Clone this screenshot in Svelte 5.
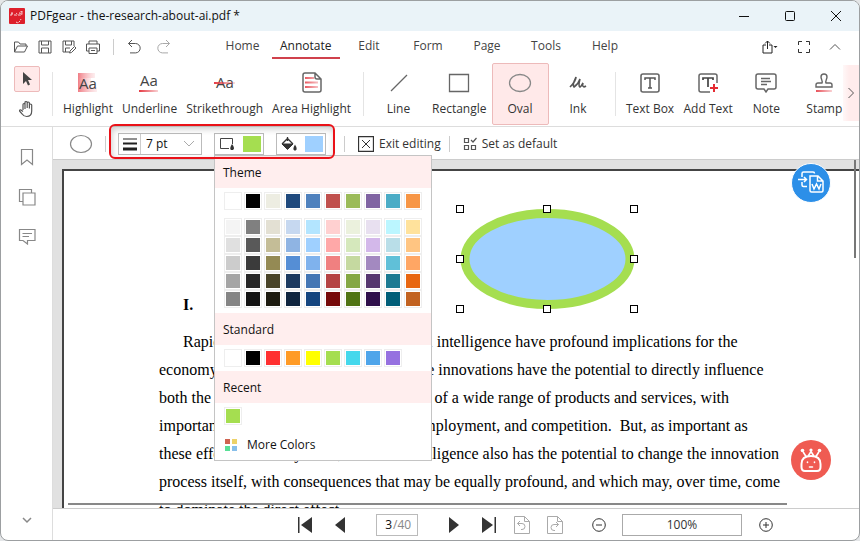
<script lang="ts">
	const tabs = ['Home', 'Annotate', 'Edit', 'Form', 'Page', 'Tools', 'Help'];
	let activeTab = $state('Annotate');

	const toolGroups = [
		['Highlight', 'Underline', 'Strikethrough', 'Area Highlight'],
		['Line', 'Rectangle', 'Oval', 'Ink'],
		['Text Box', 'Add Text', 'Note', 'Stamp']
	];
	let activeTool = $state('Oval');

	const themeBase = [
		'#ffffff', '#000000', '#edede2', '#1f497d', '#4f81bd', '#c0504d', '#9bbb59', '#8064a2', '#4bacc6', '#f79646'
	];
	const themeShades = [
		['#f4f4f4', '#808080', '#e3e0d3', '#c6d8f0', '#b3e5ff', '#ffd0d0', '#ebf1dd', '#e8e0f0', '#bbf6ff', '#ffe29c'],
		['#e0e0e0', '#595959', '#c4bd97', '#8fb4e3', '#9fd0ff', '#ffa8a8', '#d5e8bc', '#d3b8ea', '#b9dee8', '#ffc582'],
		['#cccccc', '#3b3b3b', '#948a54', '#558ed5', '#7fb2ed', '#f08080', '#c5d9a0', '#a389c0', '#60c0d8', '#ffa664'],
		['#a5a5a5', '#262626', '#494429', '#1c3a60', '#4476b4', '#b54343', '#84a744', '#56376f', '#1c7a92', '#e86610'],
		['#858585', '#141414', '#1d1b10', '#0f243e', '#15457f', '#760909', '#507414', '#2e0f4a', '#005e78', '#c26220']
	];
	const standardColors = [
		'#ffffff', '#000000', '#ff3030', '#ff9b26', '#ffff00', '#a5de50', '#45d8ec', '#4fa5ea', '#9671e0'
	];

	let strokeColor = $state('#a5de50');
	let fillColor = $state('#9fd0ff');
	let lineWidth = $state('7 pt');
	let page = $state('3');
	let zoom = $state('100%');

	const lines = [
		'Rapid advances in the field of artificial intelligence have profound implications for the',
		'economy as well as society at large.  These innovations have the potential to directly influence',
		'both the production and the characteristics of a wide range of products and services, with',
		'important implications for productivity, employment, and competition.  But, as important as',
		'these effects are likely to be, artificial intelligence also has the potential to change the innovation',
		'process itself, with consequences that may be equally profound, and which may, over time, come',
		'to dominate the direct effect.'
	];

	const handles = [
		[0, 0], [87, 0], [174, 0],
		[0, 50], [174, 50],
		[0, 100], [87, 100], [174, 100]
	];
</script>

{#snippet swatches(colors: string[])}
	<div class="swatches">
		{#each colors as color}
			<button class="swatch" aria-label={color} onclick={() => (strokeColor = color)}>
				<span style="background: {color}"></span>
			</button>
		{/each}
	</div>
{/snippet}

{#snippet toolIcon(name: string)}
	<svg class="tool-icon" width="24" height="24" viewBox="0 0 24 24" fill="none" stroke="#666" stroke-width="1.3">
		{#if name === 'Highlight'}
			<path d="M2 2h17v5H2z" fill="url(#fade)" stroke="none" />
			<path d="M2 7h13v9H2z" fill="url(#fade)" stroke="none" />
			<path d="M2 16h19v5H2z" fill="url(#fade)" stroke="none" />
			<text x="3" y="18" class="aa">Aa</text>
		{:else if name === 'Underline'}
			<text x="2" y="15" class="aa">Aa</text>
			<path d="M1 20h18v.1z" stroke="url(#red)" stroke-width="2" />
		{:else if name === 'Strikethrough'}
			<text x="3" y="17" class="aa">Aa</text>
			<path d="M1 12h20v.1z" stroke="url(#red)" stroke-width="2" />
		{:else if name === 'Area Highlight'}
			<path d="M5 2h10l6 6v11q0 2-2 2H5q-2 0-2-2V4q0-2 2-2zM15 2v4q0 2 2 2h4" stroke-width="1.500" />
			<path d="M5 7h8v.1zM5 11.500h12v.1zM5 16h12v.1z" stroke="url(#red)" stroke-width="2" />
		{:else if name === 'Line'}
			<path d="M4 20 20 4" />
		{:else if name === 'Rectangle'}
			<path d="M2.500 3.500h19v17h-19z" />
		{:else if name === 'Oval'}
			<ellipse cx="12" cy="12" rx="10.500" ry="8.500" stroke="#888" />
		{:else if name === 'Ink'}
			<path d="M4 16c4-4 6-7 6-10-2 4-4 8-2 10 3-2 5-5 6-8-1 4-2 7 0 8 2-1 2-3 3-4-1 3 0 5 3 3" stroke="#555" stroke-width="1.600" />
		{:else if name === 'Text Box'}
			<rect x="3" y="3" width="18" height="18" rx="2" stroke-width="1.600" />
			<path d="M7 9V7h10v2M12 7v10M10 17h4" stroke="#555" stroke-width="1.500" />
		{:else if name === 'Add Text'}
			<path d="M14 21H5q-2 0-2-2V5q0-2 2-2h14q2 0 2 2v7" stroke-width="1.500" />
			<path d="M7 9V7h10v2M12 7v9" stroke="#444" stroke-width="1.700" />
			<path d="M18 13v8M14 17h8" stroke="#e52b32" stroke-width="2" />
		{:else if name === 'Note'}
			<path d="M4 3h16q2 0 2 2v11q0 2-2 2h-6l-2 3-2-3H4q-2 0-2-2V5q0-2 2-2z" stroke-width="1.500" />
			<path d="M7 7.500h9M7 10.500h10M7 13.500h6" />
		{:else}
			<path d="M10 12c1-2-1-4-1-6 0-4 6-4 6 0 0 2-2 4-1 6h4q2 0 2 2v2H4v-2q0-2 2-2z" stroke-width="1.400" />
			<path d="M4 20h15v.1z" stroke="url(#red)" stroke-width="2" />
		{/if}
	</svg>
{/snippet}

<svg class="defs" width="0" height="0" aria-hidden="true">
	<defs>
		<linearGradient id="fade">
			<stop offset="0" stop-color="#f07c84" />
			<stop offset="1" stop-color="#f8c4c8" stop-opacity="0.300" />
		</linearGradient>
		<linearGradient id="red" gradientUnits="userSpaceOnUse" x1="2" y1="0" x2="21" y2="0">
			<stop offset="0" stop-color="#e6414a" />
			<stop offset="1" stop-color="#e6414a" stop-opacity="0.200" />
		</linearGradient>
	</defs>
</svg>

<div class="window">
	<header class="titlebar">
		<svg class="logo" width="16" height="16" viewBox="0 0 16 16">
			<rect width="16" height="16" rx="1" fill="#dd1f2b" />
			<path d="M2 8V5h2v1H2M6 8V5M7 5q2 1 0 3M10 8V5h1M13 4q-2-1-2 1t2 0V3M13 5q0 3-2 2M7 14l2 1 2-2 1-2" stroke="#fff" fill="none" stroke-dasharray="2 1" stroke-width="0.800" />
		</svg>
		<h1>PDFgear - the-research-about-ai.pdf *</h1>
		<div class="window-buttons">
			<button aria-label="Minimize"><svg width="12" height="12" stroke="#111"><path d="M1 6.500h10" /></svg></button>
			<button aria-label="Maximize"><svg width="12" height="12" stroke="#111" fill="none"><rect x="1.500" y="1.500" width="9" height="9" rx="1" /></svg></button>
			<button aria-label="Close"><svg width="12" height="12" stroke="#111"><path d="m1 1 10 10M11 1 1 11" /></svg></button>
		</div>
	</header>

	<div class="menubar">
		<div class="quick">
			<button aria-label="Open"><svg width="16" height="16" viewBox="0 0 16 16"><path d="M1.500 13V3h4l1.500 2h6v2M1.500 13l3-6h10l-3 6z" /></svg></button>
			<button aria-label="Save"><svg width="16" height="16" viewBox="0 0 16 16"><path d="M2 2h12v12H2zM4.500 2v4h7V2M4.500 14V9h7v5" /></svg></button>
			<button aria-label="Save as"><svg width="16" height="16" viewBox="0 0 16 16"><path d="M8 13H2V2h11v5M4.500 2v4h6V2M4.500 13V9H9M9 12l4.500-4.500 1.500 1.500-4.500 4.500-2 .5z" /></svg></button>
			<button aria-label="Print"><svg width="16" height="16" viewBox="0 0 16 16"><path d="M4 5V2h8v3M4 12H1.500V5h13v7H12M4 9h8v5.500H4zM6 11.500h4" /></svg></button>
			<span class="divider"></span>
			<button aria-label="Undo"><svg width="16" height="16" viewBox="0 0 16 16"><path d="M6 1 2.500 4.500 6 8M2.500 4.500h7a4.700 4.700 0 0 1 0 9.400H4" /></svg></button>
			<button class="redo" aria-label="Redo"><svg width="16" height="16" viewBox="0 0 16 16"><path d="m10 1 3.500 3.500L10 8M13.500 4.500h-7a4.700 4.700 0 0 0 0 9.400H12" /></svg></button>
		</div>
		<nav>
			{#each tabs as tab}
				<button class:active={tab === activeTab} onclick={() => (activeTab = tab)}>{tab}</button>
			{/each}
		</nav>
		<div class="view-actions">
			<button aria-label="Share"><svg width="18" height="16" viewBox="0 0 18 16"><path d="M5 6H2v8h9V6H8M6.500 10V2M4 4.500 6.500 2 9 4.500" stroke="#222" /><path d="M12.500 7h4l-2 2z" fill="#222" stroke="none" /></svg></button>
			<button aria-label="Full screen"><svg width="14" height="14" viewBox="0 0 14 14"><path d="M1.500 5V1.500H5M9 1.500h3.500V5M12.500 9v3.500H9M5 12.500H1.500V9" stroke="#333" /></svg></button>
			<button aria-label="Collapse ribbon"><svg width="12" height="12" viewBox="0 0 12 12"><path d="m1 8.500 5-5 5 5" /></svg></button>
		</div>
	</div>

	<div class="ribbon">
		<div class="pointer-tools">
			<button class="selected" aria-label="Select">
				<svg width="14" height="18" viewBox="0 0 14 18"><path d="M3 2v12l3-3 2 4.500 2-1L8 10h4z" fill="#444" /></svg>
			</button>
			<button aria-label="Hand">
				<svg width="18" height="18" viewBox="0 0 18 18" fill="none" stroke="#555" stroke-width="1.200"><path d="M5 10V4.500q0-1 1-1t1 1V9M7 8V2.500q0-1 1-1t1.200 1V8M9.200 8V3q0-1 1.100-1t1.100 1v5.500M11.400 8.500V5q0-1 1.100-1t1.200 1v6q0 5.500-5 5.500-3 0-4.500-2.500L1.500 11q0-1.500 1.500-1l2 1.500" /></svg>
			</button>
		</div>
		{#each toolGroups as group}
			<div class="tool-group">
				{#each group as tool}
					<button class:selected={tool === activeTool} onclick={() => (activeTool = tool)}>
						{@render toolIcon(tool)}
						<span>{tool}</span>
					</button>
				{/each}
			</div>
		{/each}
		<button class="more-tools" aria-label="Scroll right">
			<svg width="8" height="12" fill="none" stroke="#555"><path d="m1.500 1 5 5-5 5" /></svg>
		</button>
	</div>

	<div class="body">
		<aside>
			<button aria-label="Bookmarks"><svg width="18" height="18" viewBox="0 0 18 18"><path d="M3.500 1.500h11v15L9 12l-5.500 4.500z" /></svg></button>
			<button aria-label="Thumbnails"><svg width="18" height="18" viewBox="0 0 18 18"><path d="M5 13.500H1.500v-12h12V5M5 5h12v12H5z" /></svg></button>
			<button aria-label="Comments"><svg width="18" height="18" viewBox="0 0 18 18"><path d="M1.500 1.500h15.500v11H9.500V16L5 12.500H1.500zM4.500 5.500H14M4.500 8.500H11" /></svg></button>
			<button class="expand" aria-label="Expand"><svg width="12" height="12" viewBox="0 0 12 12"><path d="m2 4 4 4 4-4" stroke-width="1.500" /></svg></button>
		</aside>

		<div class="workspace">
			<div class="optionbar">
				<svg class="shape" width="24" height="20" fill="none" stroke="#888" stroke-width="1.200"><ellipse cx="12" cy="10" rx="10.500" ry="8.500" /></svg>
				<span class="divider"></span>
				<div class="style-options">
					<label class="width-picker">
						<svg width="14" height="14" stroke="#222"><path d="M0 2h14" /><path d="M0 6.500h14" stroke-width="2" /><path d="M0 12h14" stroke-width="3" /></svg>
						<select bind:value={lineWidth} aria-label="Line width">
							<option>1 pt</option>
							<option>3 pt</option>
							<option>7 pt</option>
						</select>
						<svg class="caret" width="12" height="8" fill="none" stroke="#aaa"><path d="m1 1 5 5 5-5" /></svg>
					</label>
					<div class="stroke-picker">
						<button class="color-button" aria-label="Stroke color">
							<svg width="16" height="16" viewBox="0 0 16 16"><path d="M10 12.500H1.500v-10h12V8" fill="none" stroke="#444" /><path d="M13 8q3 4 1.500 5.500-1.500 1.200-3 0Q10.500 12 13 8z" fill="#333" /></svg>
							<span style="background: {strokeColor}"></span>
						</button>
						<div class="palette">
							<h2>Theme</h2>
							<div class="base">{@render swatches(themeBase)}</div>
							<div class="shades">
								{#each themeShades as row}
									{@render swatches(row)}
								{/each}
							</div>
							<h2>Standard</h2>
							<div class="base">{@render swatches(standardColors)}</div>
							<h2>Recent</h2>
							<div class="base">{@render swatches(['#a5de50'])}</div>
							<button class="more-colors">
								<svg width="12" height="12"><path d="M0 0h5v5H0z" fill="#cf6350" /><path d="M7 0h5v5H7z" fill="#edd268" /><path d="M0 7h5v5H0z" fill="#58df96" /><path d="M7 7h5v5H7z" fill="#87bfea" /></svg>
								More Colors
							</button>
						</div>
					</div>
					<button class="color-button" aria-label="Fill color">
						<svg width="16" height="16" viewBox="0 0 16 16"><path d="M1 8h11L6.500 13.500z" fill="#333" stroke="#333" /><path d="M1 8l5.500-5.500L12 8M6.500 5V1" fill="none" stroke="#333" stroke-width="1.300" /><path d="M14 8.500q2.500 4 1.200 5.500-1.200 1-2.400 0-1.200-1.500 1.200-5.500z" fill="#333" /></svg>
						<span style="background: {fillColor}"></span>
					</button>
				</div>
				<span class="divider"></span>
				<button class="option">
					<svg width="16" height="16" fill="none" stroke="#333"><path d="M.5.5h15v15H.5z" stroke-width="1.300" /><path d="m4 4 8 8M12 4l-8 8" /></svg>
					Exit editing
				</button>
				<span class="divider"></span>
				<button class="option">
					<svg width="14" height="14" fill="none" stroke="#555" stroke-width="1.200"><path d="M1.500 1.500h4v4h-4zM1.500 8.500h4v4h-4zM8.500 8.500h4v4h-4zM8 3l2 2 3.500-4" /></svg>
					Set as default
				</button>
			</div>

			<main>
				<article>
					<h3>I.</h3>
					<p>
						{#each lines as line}
							<span>{line}</span>
						{/each}
					</p>
					<svg class="annotation" width="182" height="108" viewBox="-4 -4 182 108">
						<ellipse cx="87.500" cy="50" rx="82.500" ry="45.500" fill={fillColor} stroke={strokeColor} stroke-width="9" />
						{#each handles as [x, y]}
							<rect x={x - 3.5} y={y - 3.5} width="7" height="7" fill="#fff" stroke="#000" />
						{/each}
					</svg>
				</article>
				<div class="page-rule"></div>
				<button class="float convert" aria-label="Convert to Word">
					<svg width="28" height="26" viewBox="0 0 28 26" fill="none" stroke="#fff" stroke-width="1.500">
						<path d="M5 7V3.500q0-1.500 1.500-1.500H16q1.500 0 1.500 1.500M5 12v3q0 1.500 1.500 1.500H10M1 9.500h8M7 7l2.500 2.500L7 12" />
						<path d="M13 6h8l5 5v9.500q0 1.500-1.500 1.500h-10q-1.500 0-1.500-1.500zM20.500 6v5H26" />
						<path d="m15 14 2 5 2.500-5 2.500 5 2-5" />
					</svg>
				</button>
				<button class="float assistant" aria-label="Assistant">
					<svg width="26" height="28" viewBox="0 0 26 28" fill="none" stroke="#fff" stroke-width="2" stroke-linecap="round">
						<path d="M7 25q-3.500 0-3.500-4v-3q0-8 9.500-8t9.500 8v3q0 4-3.500 4z" />
						<path d="M8 10.500 5.500 6.500M18 10.500l2.500-4M10.500 9.500 13 5.500l2.500 4" stroke-width="1.600" />
						<path d="M9.500 16v.5M16.500 16v.5M11.500 21h3" stroke-width="1.600" />
						<g fill="#fff" stroke="none"><circle cx="4.500" cy="4.500" r="1.800" /><circle cx="21.500" cy="4.500" r="1.800" /><circle cx="13" cy="4" r="1.600" /></g>
					</svg>
				</button>
				<div class="scroll-thumb"></div>
			</main>

			<footer>
				<button aria-label="First page"><svg width="16" height="16" fill="#333"><path d="M1 0h1.500v16H1zM15 0v16L4 8z" /></svg></button>
				<button aria-label="Previous page"><svg width="10" height="16" fill="#333"><path d="M10 0v16L0 8z" /></svg></button>
				<label class="page-box">
					<input bind:value={page} aria-label="Page" />
					<span>/40</span>
				</label>
				<button aria-label="Next page"><svg width="10" height="16" fill="#333"><path d="M0 0v16l10-8z" /></svg></button>
				<button aria-label="Last page"><svg width="16" height="16" fill="#333"><path d="M13.500 0H15v16h-1.500zM1 0v16l11-8z" /></svg></button>
				<button class="history" aria-label="Previous view"><svg width="16" height="18" fill="none" stroke="#aaa"><path d="M.5.5h10l5 5v12H.5zM10.500.5v5h5M6 5 3.500 7.500 6 10M3.500 7.500H8q3 0 3 3t-3 3H7" /></svg></button>
				<button class="history" aria-label="Next view"><svg width="16" height="18" fill="none" stroke="#aaa"><path d="M.5.5h10l5 5v12H.5zM10.500.5v5h5M9 6l2.500 2.500L9 11M11.500 8.500H7q-3 0-3 3t3 3h1" /></svg></button>
				<button class="zoom-out" aria-label="Zoom out"><svg width="14" height="14" fill="none" stroke="#333"><circle cx="7" cy="7" r="6.300" /><path d="M4 7h6" /></svg></button>
				<input class="zoom" bind:value={zoom} aria-label="Zoom" />
				<button aria-label="Zoom in"><svg width="14" height="14" fill="none" stroke="#333"><circle cx="7" cy="7" r="6.300" /><path d="M4 7h6M7 4v6" /></svg></button>
			</footer>
		</div>
	</div>
</div>

<style>
	:global(body) {
		background: #e4e6e8;
	}
	* {
		box-sizing: border-box;
	}
	button,
	input,
	select {
		font: inherit;
		color: inherit;
		background: none;
		border: 0;
		margin: 0;
		padding: 0;
	}
	svg {
		display: block;
		flex: none;
	}
	.defs {
		position: absolute;
	}
	.window {
		display: flex;
		flex-direction: column;
		height: 100vh;
		border: 1px solid #9c9fa1;
		border-radius: 8px;
		overflow: hidden;
		background: #fff;
		color: #333;
		font: 12px/16px 'Open Sans', 'Noto Sans', sans-serif;
	}

	.titlebar {
		display: flex;
		align-items: center;
		height: 30px;
		padding-left: 8px;
		gap: 5px;
		background: #eaf3f8;
	}
	h1 {
		flex: 1;
		margin: 0;
		font-size: 12px;
		font-weight: 400;
		color: #111;
	}
	.window-buttons {
		display: flex;
	}
	.window-buttons button {
		display: grid;
		place-items: center;
		width: 46px;
		height: 30px;
	}

	.menubar {
		display: flex;
		align-items: center;
		height: 31px;
		padding: 0 18px 0 12px;
	}
	.quick {
		display: flex;
		align-items: center;
		gap: 8px;
		width: 200px;
	}
	.quick svg,
	.view-actions svg,
	aside svg {
		fill: none;
		stroke: #555;
	}
	.quick .redo {
		opacity: 0.5;
		margin-left: 6px;
	}
	.divider {
		width: 1px;
		height: 16px;
		background: #ccc;
	}
	.quick .divider {
		margin: 0 4px;
	}
	nav {
		display: flex;
		flex: 1;
	}
	nav button {
		min-width: 59px;
		height: 24px;
		padding: 0 8px;
		border-bottom: 2px solid transparent;
		color: #444;
	}
	nav .active {
		border-color: #d0414c;
		color: #222;
	}
	.view-actions {
		display: flex;
		align-items: center;
		gap: 18px;
	}

	.ribbon {
		display: flex;
		align-items: center;
		position: relative;
		height: 65px;
		border-bottom: 1px solid #ddd;
		overflow: hidden;
	}
	.pointer-tools {
		display: flex;
		flex-direction: column;
		align-items: center;
		gap: 4px;
		flex: none;
		width: 51px;
	}
	.pointer-tools button {
		display: grid;
		place-items: center;
		width: 26px;
		height: 26px;
		border: 1px solid transparent;
		border-radius: 2px;
	}
	.ribbon .selected {
		background: #ffe9e9;
		border-color: #edbaba;
	}
	.tool-group {
		display: flex;
		gap: 1px;
		flex: none;
		padding: 0 8px 0 7px;
		position: relative;
	}
	.tool-group::before {
		content: '';
		position: absolute;
		left: 0;
		top: 9px;
		bottom: 9px;
		width: 1px;
		background: #e4e4e4;
	}
	.tool-group button {
		display: flex;
		flex-direction: column;
		align-items: center;
		gap: 6px;
		min-width: 57px;
		height: 62px;
		padding: 7px 3px 0;
		border: 1px solid transparent;
		border-radius: 2px;
		white-space: nowrap;
	}
	.aa {
		font: 500 15px 'Open Sans', sans-serif;
		fill: #444;
		stroke: none;
	}
	.more-tools {
		display: grid;
		place-items: center;
		position: absolute;
		right: 0;
		top: 3px;
		width: 16px;
		height: 56px;
		background: linear-gradient(90deg, #ffecec66, #ffecec 6px);
	}

	.body {
		display: flex;
		flex: 1;
		min-height: 0;
	}
	aside {
		display: flex;
		flex-direction: column;
		align-items: center;
		gap: 22px;
		flex: none;
		width: 52px;
		padding: 21px 0 14px;
		border-right: 1px solid #ddd;
	}
	aside svg {
		stroke: #888;
		stroke-width: 1.2;
	}
	aside .expand {
		margin-top: auto;
	}
	.workspace {
		display: flex;
		flex-direction: column;
		flex: 1;
		min-width: 0;
	}

	.optionbar {
		display: flex;
		align-items: center;
		height: 33px;
		flex: none;
		padding: 2px 0 0 16px;
		border-bottom: 1px solid #ccc;
	}
	.shape {
		margin-right: 12px;
	}
	.style-options {
		display: flex;
		align-items: center;
		gap: 12px;
		position: relative;
		margin: 0 18px 0 12px;
	}
	/* callout frame round the line and fill pickers */
	.style-options::after {
		content: '';
		position: absolute;
		z-index: 3;
		inset: -9px -9px -4px -9px;
		border: 2px solid #ea1118;
		border-radius: 6px;
		box-shadow: inset 1px 3px 6px #0003;
		pointer-events: none;
	}
	.width-picker {
		display: flex;
		align-items: center;
		position: relative;
		width: 84px;
		height: 22px;
		padding-left: 4px;
		border: 1px solid #bbb;
		color: #111;
	}
	select {
		appearance: none;
		flex: 1;
		height: 20px;
		margin-left: 3px;
		padding-left: 5px;
		border-left: 1px solid #ccc;
	}
	.caret {
		position: absolute;
		right: 6px;
		pointer-events: none;
	}
	.stroke-picker {
		position: relative;
	}
	.color-button {
		display: flex;
		align-items: center;
		justify-content: space-between;
		width: 50px;
		height: 22px;
		padding: 0 2px 0 4px;
		border: 1px solid #bbb;
	}
	.color-button span {
		width: 18px;
		height: 16px;
	}
	.option {
		display: flex;
		align-items: center;
		gap: 5px;
		margin: 0 8px 0 13px;
		white-space: nowrap;
	}

	.palette {
		position: absolute;
		z-index: 2;
		left: 0;
		top: 100%;
		width: 218px;
		padding-bottom: 7px;
		border: 1px solid #c4c4c4;
		background: #fff;
		color: #111;
	}
	h2 {
		margin: 0;
		padding: 9px 8px 7px;
		background: #ffeeee;
		font-size: 12px;
		font-weight: 400;
	}
	.base {
		padding: 4px 9px;
	}
	.shades {
		padding: 4px 9px 5px;
	}
	.swatches {
		display: flex;
		gap: 2px;
	}
	.swatch {
		display: flex;
		width: 18px;
		height: 18px;
		padding: 1px;
		border: 1px solid #eee;
	}
	.swatch span {
		flex: 1;
	}
	.more-colors {
		display: flex;
		align-items: center;
		gap: 10px;
		margin-top: 8px;
		padding-left: 10px;
	}

	main {
		flex: 1;
		min-height: 0;
		position: relative;
		overflow: hidden;
		padding: 9px 0 0 9px;
		background: #e1e1e1;
	}
	article {
		position: relative;
		height: 100%;
		border: solid #444;
		border-width: 2px 0 0 2px;
		padding: 124px 0 0 95px;
		background: #fff;
		color: #000;
		font: 16px/28px 'Liberation Serif', 'Times New Roman', serif;
	}
	h3 {
		margin: 0 0 13px;
		padding-left: 24px;
		font-size: 16px;
		line-height: 20px;
	}
	p {
		margin: 0;
		text-indent: 24px;
	}
	p span {
		display: block;
		white-space: pre;
	}
	p span + span {
		text-indent: 0;
	}
	.annotation {
		position: absolute;
		left: 392px;
		top: 34px;
	}
	.page-rule {
		position: absolute;
		left: 15px;
		right: 72px;
		bottom: 3px;
		height: 2px;
		background: #888;
	}
	.float {
		display: grid;
		place-items: center;
		position: absolute;
		right: 28px;
		width: 40px;
		height: 40px;
		border-radius: 50%;
	}
	.convert {
		top: 3px;
		border: 1px solid #fff;
		background: #2c8fe8;
	}
	.assistant {
		bottom: 28px;
		background: #ef5b52;
	}
	.scroll-thumb {
		position: absolute;
		right: 3px;
		top: 0;
		width: 2px;
		height: 98px;
		background: #777;
	}

	footer {
		display: flex;
		align-items: center;
		flex: none;
		height: 32px;
		padding-left: 244px;
		gap: 22px;
		border-top: 1px solid #ccc;
	}
	.page-box {
		display: flex;
		align-items: center;
		width: 42px;
		height: 22px;
		margin: 0 9px;
		border: 1px solid #bbb;
		color: #888;
	}
	.page-box input {
		width: 16px;
		padding-right: 1px;
		color: #111;
		text-align: right;
	}
	.history {
		margin-left: -5px;
	}
	.zoom-out {
		margin: 0 -6px 0 7px;
	}
	.zoom {
		width: 120px;
		height: 22px;
		margin-right: -5px;
		border: 1px solid #aaa;
		text-align: center;
	}
</style>
